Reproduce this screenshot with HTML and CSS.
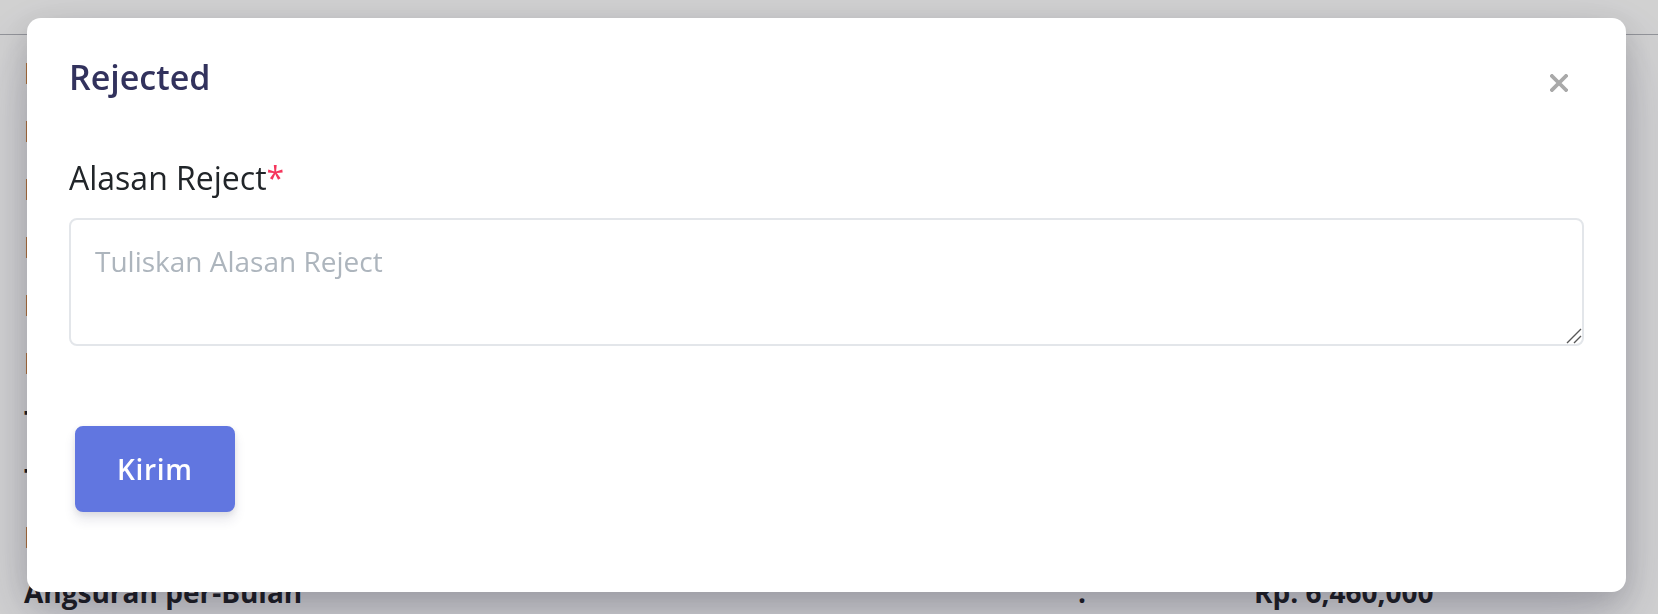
FILE: index.html
```html
<!DOCTYPE html>
<html lang="id">
<head>
<meta charset="utf-8">
<title>Rejected</title>
<link rel="stylesheet" href="styles.css">
</head>
<body>
<div class="page">
  <div class="topbar"></div>
  <div class="details">
    <div class="row"><span>Nama Lengkap</span><span>:</span><span>Budi Santoso</span></div>
    <div class="row"><span>NIK</span><span>:</span><span>3174012345670001</span></div>
    <div class="row"><span>No. Handphone</span><span>:</span><span>081234567890</span></div>
    <div class="row"><span>Pekerjaan</span><span>:</span><span>Karyawan Swasta</span></div>
    <div class="row"><span>Penghasilan</span><span>:</span><span>Rp. 15,000,000</span></div>
    <div class="row"><span>Plafon Pinjaman</span><span>:</span><span>Rp. 60,000,000</span></div>
    <div class="row"><span>Tenor</span><span>:</span><span>12 Bulan</span></div>
    <div class="row"><span>Tujuan Pinjaman</span><span>:</span><span>Renovasi Rumah</span></div>
    <div class="row"><span>Bunga</span><span>:</span><span>1.5%</span></div>
    <div class="row row-last"><span>Angsuran per-Bulan</span><span>:</span><span>Rp. 6,460,000</span></div>
  </div>
</div>
<div class="backdrop"></div>
<div class="modal">
  <div class="modal-header">
    <h5 class="modal-title">Rejected</h5>
    <button class="close" type="button" aria-label="Close">
      <svg width="18" height="18" viewBox="0 0 18 18"><path d="M2 2L16 16M16 2L2 16" stroke="#a9a9a9" stroke-width="3.8" stroke-linecap="square"/></svg>
    </button>
  </div>
  <div class="modal-body">
    <label class="label" for="alasan">Alasan Reject<span class="req">*</span></label>
    <textarea id="alasan" class="input" rows="2" placeholder="Tuliskan Alasan Reject"></textarea>
  </div>
  <div class="modal-footer">
    <button class="btn" type="button">Kirim</button>
  </div>
</div>
</body>
</html>
```

FILE: styles.css
```css
html, body {
  margin: 0;
  padding: 0;
}
body {
  width: 1658px;
  height: 614px;
  overflow: hidden;
  background: #ffffff;
  font-family: "Open Sans", "Noto Sans", sans-serif;
}
.topbar {
  height: 34px;
  border-bottom: 1px solid #b3b5bb;
}
.details {
  padding-top: 9px;
}
.row {
  display: grid;
  grid-template-columns: 1054px 176px auto;
  padding-left: 24px;
  font-size: 28px;
  font-weight: 700;
  line-height: 58px;
  color: #1f2024;
  white-space: nowrap;
}
.row-last {
  margin-top: -3px;
}
.backdrop {
  position: fixed;
  inset: 0;
  background: rgba(0, 0, 0, 0.18);
}
.modal {
  position: fixed;
  left: 27px;
  top: 18px;
  width: 1599px;
  height: 574px;
  box-sizing: border-box;
  padding: 0 42px;
  background: #ffffff;
  border-radius: 14px;
  box-shadow: 0 30px 70px rgba(50, 50, 93, 0.2), 0 10px 30px rgba(0, 0, 0, 0.17);
  display: flex;
  flex-direction: column;
}
.modal-header {
  display: flex;
  justify-content: space-between;
  align-items: flex-start;
  padding-top: 40px;
}
.modal-title {
  margin: 0;
  font-size: 34px;
  font-weight: 600;
  line-height: 38px;
  color: #32325d;
}
.close {
  display: block;
  width: 18px;
  height: 18px;
  padding: 0;
  margin: 16px 16px 0 0;
  border: 0;
  background: none;
}
.close svg {
  display: block;
}
.modal-body {
  padding-top: 58px;
}
.label {
  display: block;
  font-size: 32px;
  font-weight: 400;
  line-height: 48px;
  color: #212529;
  margin-bottom: 16px;
}
.req {
  color: #f5365c;
}
.input {
  display: block;
  width: 100%;
  height: 128px;
  box-sizing: border-box;
  padding: 20px 24px;
  border: 2px solid #e3e6ea;
  border-radius: 8px;
  font-family: "Open Sans", "Noto Sans", sans-serif;
  font-size: 28px;
  line-height: 42px;
  color: #525f7f;
  background-color: #ffffff;
  background-image: url("data:image/svg+xml,%3Csvg xmlns='http://www.w3.org/2000/svg' width='16' height='16' viewBox='0 0 16 16'%3E%3Cpath d='M1 15L15 1M8 15L15 8' stroke='%23585858' stroke-width='1.4' fill='none'/%3E%3C/svg%3E");
  background-repeat: no-repeat;
  background-position: right 0 bottom 0;
  background-size: 16px 16px;
  resize: none;
  outline: none;
}
.input::placeholder {
  color: #adb5bd;
}
.modal-footer {
  padding-top: 80px;
}
.btn {
  margin-left: 6px;
  font-family: "Open Sans", "Noto Sans", sans-serif;
  font-size: 28px;
  font-weight: 600;
  line-height: 42px;
  letter-spacing: 0.025em;
  padding: 20px 40px;
  border: 2px solid #6176e0;
  border-radius: 8px;
  background: #6176e0;
  color: #ffffff;
  box-shadow: 0 8px 12px rgba(50, 50, 93, 0.11), 0 2px 6px rgba(0, 0, 0, 0.08);
}
```
